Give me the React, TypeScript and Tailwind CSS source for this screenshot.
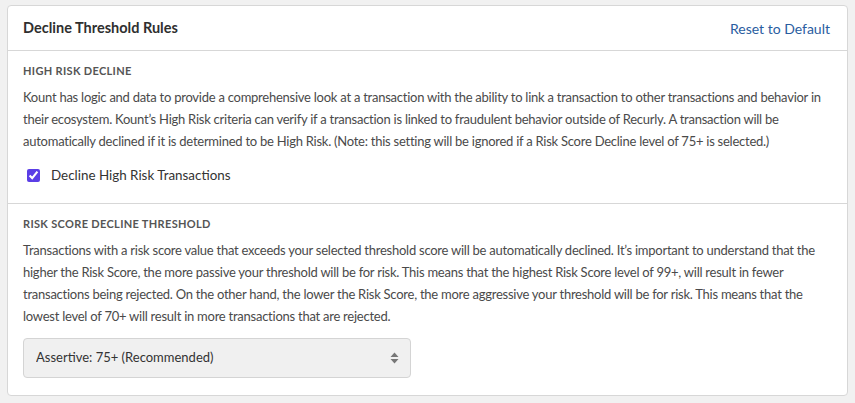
const highRisk = [
  'Kount has logic and data to provide a comprehensive look at a transaction with the ability to link a transaction to other transactions and behavior in',
  'their ecosystem. Kount’s High Risk criteria can verify if a transaction is linked to fraudulent behavior outside of Recurly. A transaction will be',
  'automatically declined if it is determined to be High Risk. (Note: this setting will be ignored if a Risk Score Decline level of 75+ is selected.)',
]

const riskScore = [
  'Transactions with a risk score value that exceeds your selected threshold score will be automatically declined. It’s important to understand that the',
  'higher the Risk Score, the more passive your threshold will be for risk. This means that the highest Risk Score level of 99+, will result in fewer',
  'transactions being rejected. On the other hand, the lower the Risk Score, the more aggressive your threshold will be for risk. This means that the',
  'lowest level of 70+ will result in more transactions that are rejected.',
]

function Lines({ lines }: { lines: string[] }) {
  return (
    <p className="mt-[7px] text-[13px] leading-[22px] tracking-[-0.25px] text-[#4a4a4a]">
      {lines.map(l => (
        <span key={l} className="block whitespace-nowrap">{l}</span>
      ))}
    </p>
  )
}

export default function App() {
  return (
    <div className="min-h-screen bg-[#f1f1f1] px-[7px] pt-[5px] font-['Lato',sans-serif]">
      <div className="rounded-[4px] border border-[#d7d7d7] bg-white">
        <div className="flex h-[45px] items-center justify-between border-b border-[#d7d7d7] pl-[15px] pr-[17px]">
          <h2 className="text-[14.5px] font-bold text-[#2f2f2f]">Decline Threshold Rules</h2>
          <a href="#" className="text-[14px] text-[#2a5d9f]">Reset to Default</a>
        </div>

        <div className="border-b border-[#d7d7d7] px-[15px] pb-[17px] pt-[12px]">
          <h3 className="text-[11px] font-bold uppercase leading-[16px] tracking-[0.03em] text-[#555]">High Risk Decline</h3>
          <Lines lines={highRisk} />
          <label className="mt-[12px] flex h-[22px] items-center gap-[11px] pl-[4px] text-[13.4px] text-[#333]">
            <input type="checkbox" defaultChecked className="h-[13px] w-[13px] accent-[#5b3ee6]" />
            Decline High Risk Transactions
          </label>
        </div>

        <div className="px-[15px] pb-[17px] pt-[12px]">
          <h3 className="text-[11px] font-bold uppercase leading-[16px] tracking-[0.03em] text-[#555]">Risk Score Decline Threshold</h3>
          <Lines lines={riskScore} />
          <div className="relative mt-[11px] w-[388px]">
            <select className="h-[40px] w-full appearance-none rounded-[4px] border border-[#d4d4d4] bg-[#f0f0f0] pl-[12px] text-[13px] text-[#333] outline-none">
              <option>Assertive: 75+ (Recommended)</option>
            </select>
            <svg className="pointer-events-none absolute right-[12px] top-[14px]" width="9" height="12" viewBox="0 0 9 12">
              <path d="M4.5 0.5 L8.5 5 H0.5 Z M4.5 11.5 L8.5 7 H0.5 Z" fill="#777" />
            </svg>
          </div>
        </div>
      </div>
    </div>
  )
}
